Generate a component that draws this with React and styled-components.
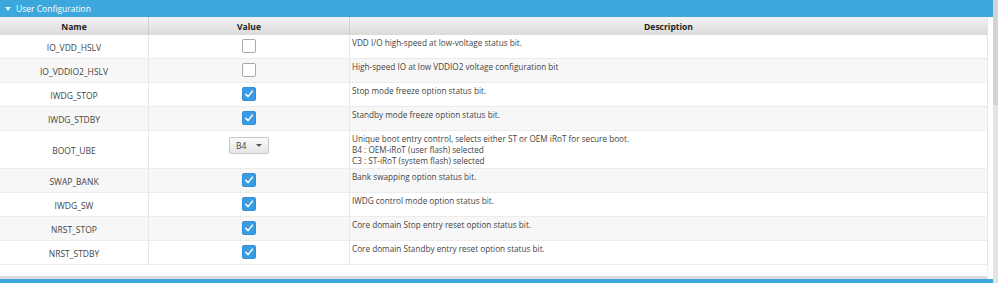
import React from 'react'
import styled, { createGlobalStyle } from 'styled-components'

const rows = [
  { name: 'IO_VDD_HSLV', kind: 'check', checked: false, desc: ['VDD I/O high-speed at low-voltage status bit.'] },
  { name: 'IO_VDDIO2_HSLV', kind: 'check', checked: false, desc: ['High-speed IO at low VDDIO2 voltage configuration bit'] },
  { name: 'IWDG_STOP', kind: 'check', checked: true, desc: ['Stop mode freeze option status bit.'] },
  { name: 'IWDG_STDBY', kind: 'check', checked: true, desc: ['Standby mode freeze option status bit.'] },
  {
    name: 'BOOT_UBE',
    kind: 'select',
    value: 'B4',
    tall: true,
    desc: [
      'Unique boot entry control, selects either ST or OEM iRoT for secure boot.',
      'B4 : OEM-iRoT (user flash) selected',
      'C3 : ST-iRoT (system flash) selected',
    ],
  },
  { name: 'SWAP_BANK', kind: 'check', checked: true, desc: ['Bank swapping option status bit.'] },
  { name: 'IWDG_SW', kind: 'check', checked: true, desc: ['IWDG control mode option status bit.'] },
  { name: 'NRST_STOP', kind: 'check', checked: true, desc: ['Core domain Stop entry reset option status bit.'] },
  { name: 'NRST_STDBY', kind: 'check', checked: true, desc: ['Core domain Standby entry reset option status bit.'] },
]

const App = () => {
  return (
    <>
      <GlobalStyle />
      <Page>
        <Main>
          <TitleBar>
            <Arrow />
            User Configuration
          </TitleBar>
          <Table>
            <HeadCell>Name</HeadCell>
            <HeadCell>Value</HeadCell>
            <HeadCell $last>Description</HeadCell>
            {rows.map((r, i) => (
              <React.Fragment key={r.name}>
                <NameCell $alt={i % 2 === 1} $tall={r.tall}>{r.name}</NameCell>
                <ValueCell $alt={i % 2 === 1} $tall={r.tall}>
                  {r.kind === 'check' ? (
                    <Check $on={r.checked}>
                      {r.checked && (
                        <svg width="10" height="10" viewBox="0 0 10 10">
                          <path d="M1.8 5.2 L4 7.6 L8.4 2.2" fill="none" stroke="#fff" strokeWidth="1.5" strokeLinecap="round" strokeLinejoin="round" />
                        </svg>
                      )}
                    </Check>
                  ) : (
                    <Select>
                      {r.value}
                      <Caret />
                    </Select>
                  )}
                </ValueCell>
                <DescCell $alt={i % 2 === 1} $tall={r.tall}>
                  {r.desc.map((d) => (
                    <div key={d}>{d}</div>
                  ))}
                </DescCell>
              </React.Fragment>
            ))}
          </Table>
          <Filler />
          <BottomBar />
        </Main>
        <ScrollTrack>
          <ScrollThumb />
        </ScrollTrack>
      </Page>
    </>
  )
}

const GlobalStyle = createGlobalStyle`
  body {
    margin: 0;
    background: #fff;
    overflow: hidden;
    font-family: "Open Sans", "Noto Sans", sans-serif;
  }
`

const Page = styled.div`
  display: flex;
  width: 998px;
  height: 283px;
`

const Main = styled.div`
  flex: 1;
  display: flex;
  flex-direction: column;
`

const TitleBar = styled.div`
  height: 17px;
  background: #3ca7dc;
  color: #fff;
  font-size: 8.5px;
  display: flex;
  align-items: center;
  gap: 5px;
  padding-left: 5px;
`

const Arrow = styled.span`
  width: 0;
  height: 0;
  border-left: 3px solid transparent;
  border-right: 3px solid transparent;
  border-top: 4px solid #e6f3fb;
`

const Table = styled.div`
  display: grid;
  grid-template-columns: 149px 201px 1fr;
  margin-right: 5px;
  border-right: 1px solid #e6e6e6;
  color: #444;
  font-size: 8.5px;
`

const HeadCell = styled.div`
  height: 18px;
  display: flex;
  align-items: center;
  justify-content: center;
  font-weight: 700;
  color: #222;
  background: linear-gradient(#f3f3f3, #dadada);
  border-right: ${(p) => (p.$last ? 'none' : '1px solid #cfcfcf')};
  box-sizing: border-box;
`

const BaseCell = styled.div`
  height: ${(p) => (p.$tall ? '38px' : '24px')};
  box-sizing: border-box;
  background: ${(p) => (p.$alt ? '#f7f7f7' : '#fff')};
  border-bottom: 1.5px solid #ececec;
`

const NameCell = styled(BaseCell)`
  display: flex;
  align-items: center;
  justify-content: center;
  border-right: 1px solid #e8e8e8;
  padding-top: 1px;
`

const ValueCell = styled(BaseCell)`
  display: flex;
  align-items: center;
  justify-content: center;
  border-right: 1px solid #e8e8e8;
  padding-bottom: 1px;
`

const DescCell = styled(BaseCell)`
  padding: 2px 0 0 2px;
  line-height: 11px;
  font-size: 8.2px;
`

const Check = styled.div`
  width: 14px;
  height: 14px;
  box-sizing: border-box;
  border-radius: 2px;
  border: 1px solid ${(p) => (p.$on ? '#2f8fd8' : '#a8a8a8')};
  background: ${(p) => (p.$on ? '#3b9ce4' : '#fff')};
  display: flex;
  align-items: center;
  justify-content: center;
`

const Select = styled.div`
  width: 40px;
  height: 17px;
  box-sizing: border-box;
  border: 1px solid #c8c8c8;
  border-radius: 2px;
  background: linear-gradient(#fafafa, #e6e6e6);
  display: flex;
  align-items: center;
  justify-content: space-between;
  padding: 0 6px 0 6px;
  color: #444;
  margin-bottom: 7px;
`

const Caret = styled.span`
  width: 0;
  height: 0;
  border-left: 3px solid transparent;
  border-right: 3px solid transparent;
  border-top: 3px solid #555;
`

const Filler = styled.div`
  flex: 1;
  margin-right: 5px;
  border-right: 1px solid #f0f0f0;
  border-bottom: 3px solid #dcdcdc;
`

const BottomBar = styled.div`
  height: 4px;
  background: #3ca7dc;
`

const ScrollTrack = styled.div`
  width: 5px;
  background: #e4e4e4;
  display: flex;
  flex-direction: column;
`

const ScrollThumb = styled.div`
  height: 105px;
  background: #d2d2d2;
`

export default App
